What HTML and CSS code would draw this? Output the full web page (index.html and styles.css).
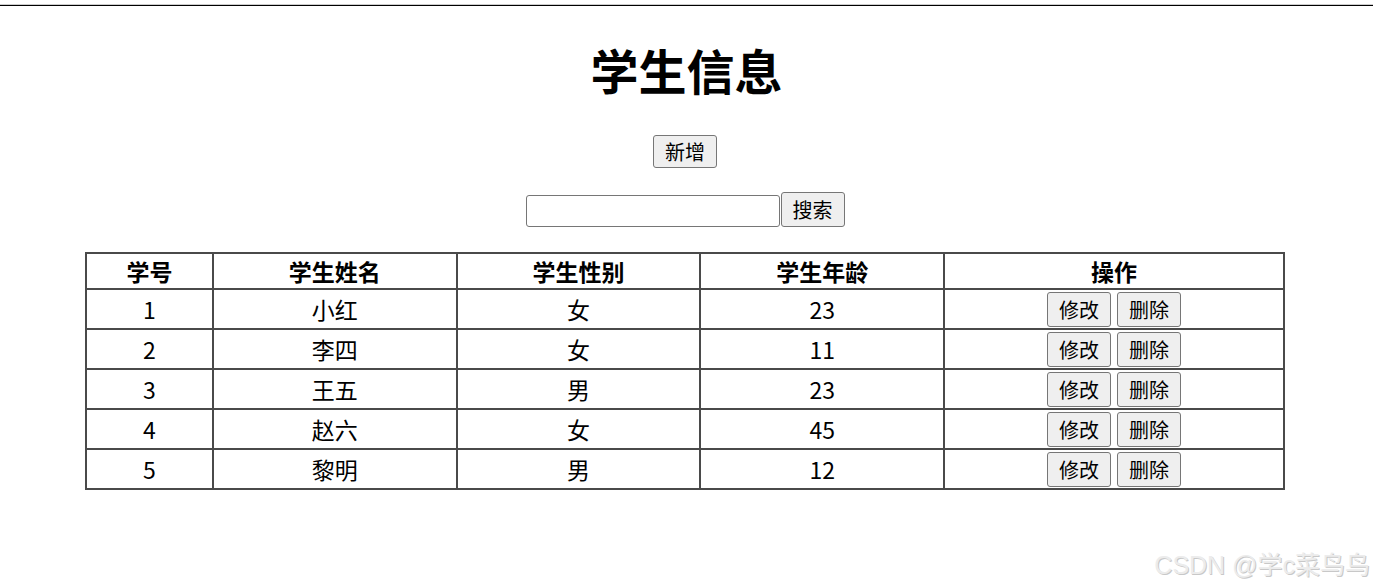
FILE: index.html
```html
<!DOCTYPE html>
<html lang="zh">
<head>
<meta charset="utf-8">
<title>学生信息</title>
<link rel="stylesheet" href="styles.css">
</head>
<body>
<div class="topline"></div>
<h1 class="title">学生信息</h1>
<div class="row add-row"><button class="btn">新增</button></div>
<div class="row search-row"><input class="search-input" type="text"><button class="btn">搜索</button></div>
<table class="grid">
  <colgroup>
    <col class="c1"><col class="c2"><col class="c3"><col class="c4"><col class="c5">
  </colgroup>
  <thead>
    <tr><th>学号</th><th>学生姓名</th><th>学生性别</th><th>学生年龄</th><th>操作</th></tr>
  </thead>
  <tbody>
    <tr><td>1</td><td>小红</td><td>女</td><td>23</td><td class="ops"><button class="btn">修改</button><button class="btn">删除</button></td></tr>
    <tr><td>2</td><td>李四</td><td>女</td><td>11</td><td class="ops"><button class="btn">修改</button><button class="btn">删除</button></td></tr>
    <tr><td>3</td><td>王五</td><td>男</td><td>23</td><td class="ops"><button class="btn">修改</button><button class="btn">删除</button></td></tr>
    <tr><td>4</td><td>赵六</td><td>女</td><td>45</td><td class="ops"><button class="btn">修改</button><button class="btn">删除</button></td></tr>
    <tr><td>5</td><td>黎明</td><td>男</td><td>12</td><td class="ops"><button class="btn">修改</button><button class="btn">删除</button></td></tr>
  </tbody>
</table>
<div class="watermark">CSDN @学c菜鸟鸟</div>
</body>
</html>
```
FILE: styles.css
```css
html, body {
  margin: 0;
  padding: 0;
  background: #fff;
  font-family: "Noto Sans CJK SC", "Noto Sans", sans-serif;
  color: #000;
}
body {
  padding-top: 4px;
  height: 584px;
  position: relative;
  overflow: hidden;
}
.topline {
  border-top: 1px solid #ccc;
  border-bottom: 1px solid #000;
  height: 0;
}
.title {
  margin: 35px 0 0 0;
  text-align: center;
  font-size: 48px;
  line-height: 56px;
  font-weight: 700;
}
.row {
  display: flex;
  justify-content: center;
  align-items: center;
  padding-right: 3px;
}
.add-row {
  margin-top: 38px;
}
.search-row {
  margin-top: 24px;
}
.btn {
  font-family: "Noto Sans CJK SC", sans-serif;
  font-size: 20px;
  line-height: 27px;
  height: 34px;
  padding: 0 10px;
  background: #efefef;
  border: 1px solid #767676;
  border-radius: 3px;
  color: #000;
  margin: 0;
}
.add-row .btn {
  height: 33px;
  width: 64px;
}
.search-row .btn {
  height: 35px;
  width: 64px;
}
.search-input {
  width: 254px;
  height: 32px;
  box-sizing: border-box;
  border: 1px solid #767676;
  border-radius: 3px;
  margin: 0 1px 0 0;
  padding: 0 4px;
  align-self: flex-end;
}
.grid {
  margin: 25px 0 0 85px;
  width: 1200px;
  border-collapse: collapse;
  border: 2px solid #4a4a4a;
  font-size: 23px;
}
.c1 { width: 127px; }
.c2 { width: 244px; }
.c3 { width: 244px; }
.c4 { width: 244px; }
.c5 { width: 340px; }
.grid th, .grid td {
  border: 2px solid #4a4a4a;
  text-align: center;
  padding: 0;
}
.grid th {
  height: 34px;
  font-weight: 700;
  line-height: 30px;
}
.grid td {
  height: 38px;
  line-height: 30px;
}
.ops .btn {
  width: 64px;
  height: 35px;
  vertical-align: middle;
  margin: 0 3px;
}
.watermark {
  position: absolute;
  right: 3px;
  bottom: 7px;
  font-family: "Liberation Sans", "Noto Sans CJK SC", sans-serif;
  font-size: 25px;
  font-weight: 400;
  color: #ececec;
  text-shadow: 1px 1px 0 #c8c8c8;
}
```
